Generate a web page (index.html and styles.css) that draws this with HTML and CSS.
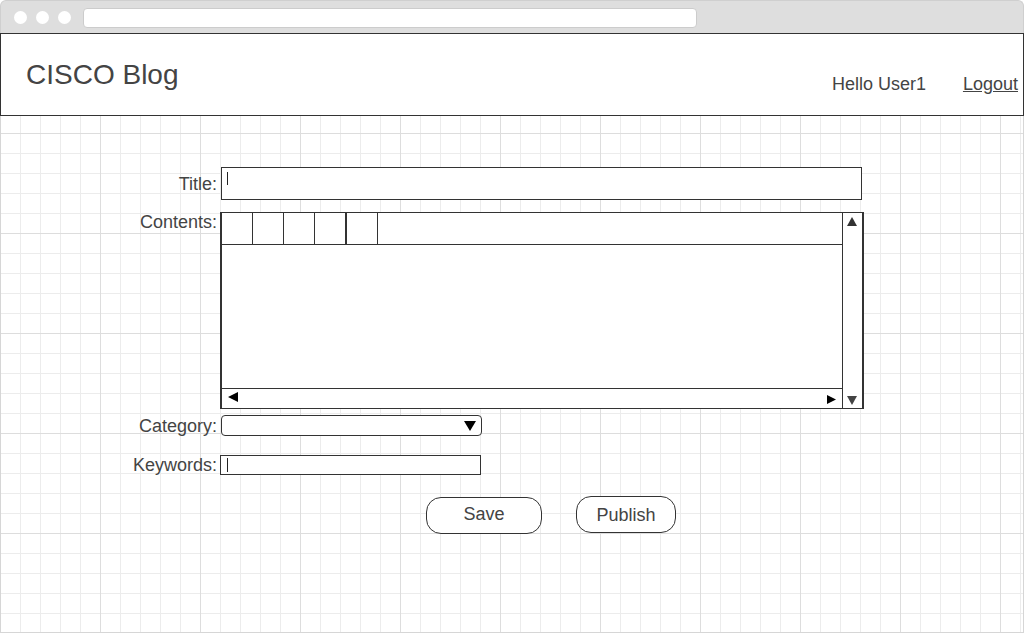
FILE: index.html
```html
<!DOCTYPE html>
<html lang="en">
<head>
<meta charset="utf-8">
<title>CISCO Blog</title>
<link rel="stylesheet" href="styles.css">
</head>
<body>
<div class="window">
  <div class="chrome">
    <span class="dot"></span>
    <span class="dot"></span>
    <span class="dot"></span>
    <span class="address"></span>
  </div>
  <header class="header">
    <div class="brand">CISCO Blog</div>
    <nav class="nav">
      <span class="hello">Hello User1</span>
      <a class="logout" href="#">Logout</a>
    </nav>
  </header>
  <main class="main">
    <div class="form">
      <div class="row row-title">
        <label class="label">Title:</label>
        <div class="field title-input"><span class="caret caret-title"></span></div>
      </div>
      <div class="row row-contents">
        <label class="label label-top">Contents:</label>
        <div class="editor">
          <div class="toolbar">
            <span class="tool tool-first"></span>
            <span class="tool"></span>
            <span class="tool"></span>
            <span class="tool tool-thick"></span>
            <span class="tool"></span>
          </div>
          <div class="vscroll">
            <svg class="arrow-up" width="10" height="9" viewBox="0 0 10 9"><polygon points="0,9 5,0 10,9" fill="#333"/></svg>
            <svg class="arrow-down" width="10" height="9" viewBox="0 0 10 9"><polygon points="0,0 10,0 5,9" fill="#444"/></svg>
          </div>
          <div class="editor-body"></div>
          <div class="hscroll">
            <svg class="arrow-left" width="10" height="10" viewBox="0 0 10 10"><polygon points="10,0 10,10 0,5" fill="#000"/></svg>
            <svg class="arrow-right" width="9" height="9" viewBox="0 0 9 9"><polygon points="0,0 9,4.5 0,9" fill="#000"/></svg>
          </div>
        </div>
      </div>
      <div class="row row-category">
        <label class="label">Category:</label>
        <div class="field select">
          <svg class="select-arrow" width="12" height="10" viewBox="0 0 12 10"><polygon points="0,0 12,0 6,10" fill="#000"/></svg>
        </div>
      </div>
      <div class="row row-keywords">
        <label class="label">Keywords:</label>
        <div class="field keywords-input"><span class="caret caret-keywords"></span></div>
      </div>
      <div class="row row-actions">
        <span class="label"></span>
        <div class="actions">
          <button class="btn btn-save" type="button">Save</button>
          <button class="btn btn-publish" type="button">Publish</button>
        </div>
      </div>
    </div>
  </main>
</div>
</body>
</html>
```

FILE: styles.css
```css
* {
  box-sizing: border-box;
}

html, body {
  margin: 0;
  padding: 0;
  background: #ffffff;
}

body {
  font-family: "Liberation Sans", Arial, sans-serif;
  color: #444444;
}

.window {
  width: 1024px;
  height: 633px;
  display: flex;
  flex-direction: column;
}

/* Browser chrome */
.chrome {
  height: 33px;
  flex: none;
  background: #dedede;
  border: 1px solid #cfcfcf;
  border-bottom: none;
  border-radius: 6px 6px 0 0;
  display: flex;
  align-items: center;
  padding: 1px 0 0 13px;
}

.dot {
  width: 13px;
  height: 13px;
  border-radius: 50%;
  background: #ffffff;
  margin-right: 9px;
}

.dot:nth-child(3) {
  margin-right: 12px;
}

.address {
  width: 614px;
  height: 20px;
  background: #ffffff;
  border: 1px solid #cccccc;
  border-radius: 4px;
}

/* Header */
.header {
  height: 83px;
  flex: none;
  border: 1px solid #333333;
  display: flex;
  justify-content: space-between;
  align-items: flex-start;
  padding: 27px 5px 0 25px;
  background: #ffffff;
}

.brand {
  font-size: 28px;
  line-height: 28px;
  color: #444444;
}

.nav {
  display: flex;
  gap: 37px;
  font-size: 18px;
  line-height: 18px;
  margin-top: 14px;
}

.logout {
  color: #444444;
  text-decoration: underline;
}

/* Main area with grid */
.main {
  flex: 1;
  border: 1px solid #d6d6d6;
  border-top: none;
  background-color: #ffffff;
  background-image:
    linear-gradient(to right, #dddddd 1px, transparent 1px),
    linear-gradient(to bottom, #dddddd 1px, transparent 1px),
    linear-gradient(to right, #ececec 1px, transparent 1px),
    linear-gradient(to bottom, #ececec 1px, transparent 1px);
  background-size: 100px 100px, 100px 100px, 20px 20px, 20px 20px;
  background-position: -1px 17px;
  padding-top: 51px;
}

.form {
  display: flex;
  flex-direction: column;
}

.row {
  display: flex;
  align-items: center;
  margin-left: -2px;
}

.label {
  width: 218px;
  flex: none;
  text-align: right;
  font-size: 18px;
  line-height: 20px;
  margin-right: 3px;
  color: #444444;
}

.label-top {
  align-self: flex-start;
}

.field {
  background: #ffffff;
  border: 1px solid #333333;
}

.title-input {
  width: 641px;
  height: 33px;
  margin-left: 1px;
}

.caret {
  display: block;
  width: 1px;
  background: #222222;
}

.caret-title {
  height: 13px;
  margin: 4px 0 0 5px;
}

.row-contents {
  margin-top: 12px;
}

/* Rich text editor */
.editor {
  width: 644px;
  height: 197px;
  background: #ffffff;
  border: 1px solid #333333;
  border-left-width: 2px;
  border-right-width: 2px;
  display: grid;
  grid-template-columns: 1fr 20px;
  grid-template-rows: 32px 1fr 20px;
}

.toolbar {
  grid-column: 1;
  grid-row: 1;
  display: flex;
  border-bottom: 1px solid #333333;
}

.tool {
  width: 31px;
  height: 100%;
  border-right: 1px solid #333333;
}

.tool-first {
  width: 31px;
}

.tool-thick {
  border-right-width: 2px;
  width: 32px;
}

.vscroll {
  grid-column: 2;
  grid-row: 1 / span 3;
  border-left: 1px solid #333333;
  display: flex;
  flex-direction: column;
  justify-content: space-between;
  align-items: center;
  padding: 4px 1px 3px 0;
}

.arrow-up,
.arrow-down,
.arrow-left,
.arrow-right,
.select-arrow {
  display: block;
}

.editor-body {
  grid-column: 1;
  grid-row: 2;
}

.hscroll {
  grid-column: 1;
  grid-row: 3;
  border-top: 1px solid #333333;
  display: flex;
  justify-content: space-between;
  align-items: flex-start;
  padding: 0 6px 0 6px;
}

.arrow-left {
  margin-top: 3px;
}

.arrow-right {
  margin-top: 6px;
}

/* Category select */
.row-category {
  margin-top: 6px;
}

.select {
  width: 261px;
  height: 21px;
  margin-left: 1px;
  border-radius: 4px;
  display: flex;
  justify-content: flex-end;
  align-items: flex-start;
  padding: 5px 5px 0 0;
}

/* Keywords */
.row-keywords {
  margin-top: 19px;
}

.keywords-input {
  width: 261px;
  height: 20px;
}

.caret-keywords {
  height: 14px;
  margin: 2px 0 0 6px;
}

/* Buttons */
.row-actions {
  margin-top: 21px;
  align-items: flex-start;
}

.actions {
  display: flex;
  align-items: flex-start;
  gap: 34px;
  margin-left: 206px;
}

.btn {
  height: 37px;
  background: #ffffff;
  border: 1px solid #333333;
  border-radius: 15px;
  font-family: "Liberation Sans", Arial, sans-serif;
  font-size: 18px;
  color: #444444;
  padding: 0;
  line-height: 18px;
}

.btn-save {
  width: 116px;
  margin-top: 1px;
  padding-bottom: 3px;
}

.btn-publish {
  width: 100px;
}
```
